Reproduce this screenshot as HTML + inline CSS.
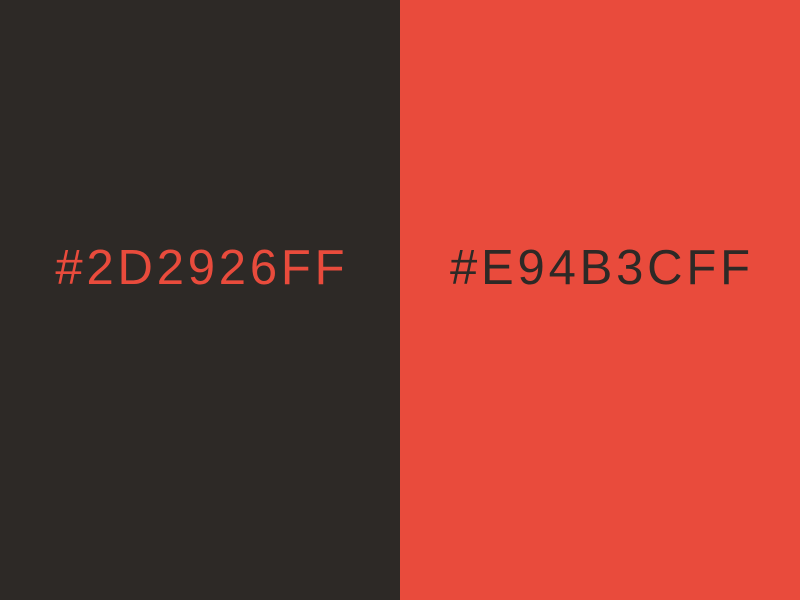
<!DOCTYPE html>
<html><head><style>
html,body{margin:0;padding:0;width:800px;height:600px;overflow:hidden}
.p{position:absolute;top:0;width:400px;height:600px}
.t{position:absolute;left:0;width:400px;text-align:center;top:240px;font-family:"Liberation Sans",sans-serif;font-size:49px;line-height:56px;letter-spacing:3.8px;text-indent:3.8px}
</style></head><body>
<div class="p" style="left:0;background:#2D2926"><div class="t" style="color:#E94B3C">#2D2926FF</div></div>
<div class="p" style="left:400px;background:#E94B3C"><div class="t" style="color:#2D2926">#E94B3CFF</div></div>
</body></html>
